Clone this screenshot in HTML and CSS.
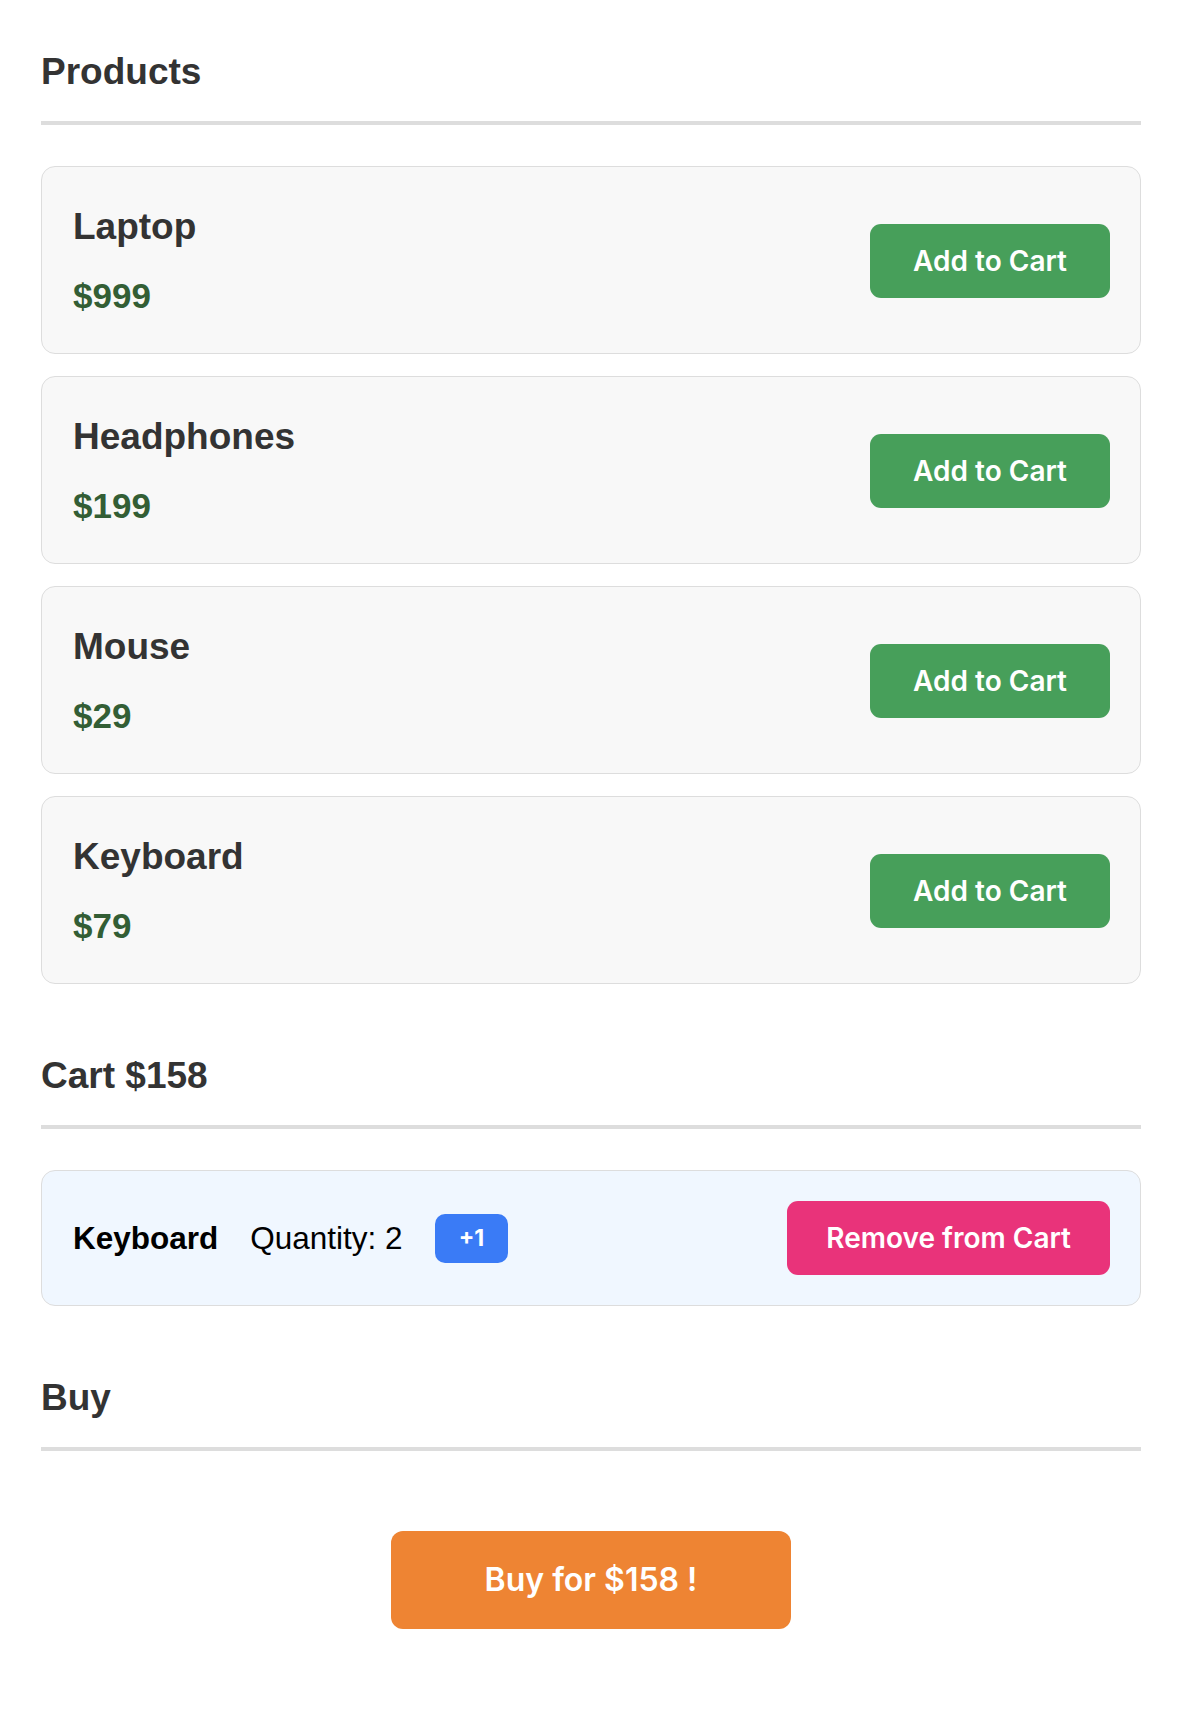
FILE: index.html
```html
<!DOCTYPE html>
<html lang="en">
<head>
<meta charset="utf-8">
<title>Shop</title>
<link rel="stylesheet" href="styles.css">
</head>
<body>
<main class="page">
  <section class="section">
    <h2 class="section-title">Products</h2>
    <div class="product-list">
      <div class="product-card">
        <div class="product-info">
          <h3 class="product-name">Laptop</h3>
          <p class="product-price">$999</p>
        </div>
        <button class="btn btn-add">Add to Cart</button>
      </div>
      <div class="product-card">
        <div class="product-info">
          <h3 class="product-name">Headphones</h3>
          <p class="product-price">$199</p>
        </div>
        <button class="btn btn-add">Add to Cart</button>
      </div>
      <div class="product-card">
        <div class="product-info">
          <h3 class="product-name">Mouse</h3>
          <p class="product-price">$29</p>
        </div>
        <button class="btn btn-add">Add to Cart</button>
      </div>
      <div class="product-card">
        <div class="product-info">
          <h3 class="product-name">Keyboard</h3>
          <p class="product-price">$79</p>
        </div>
        <button class="btn btn-add">Add to Cart</button>
      </div>
    </div>
  </section>

  <section class="section">
    <h2 class="section-title">Cart $158</h2>
    <div class="cart-item">
      <div class="cart-info">
        <strong class="cart-name">Keyboard</strong>
        <span class="cart-qty">Quantity: 2</span>
        <button class="btn btn-plus">+1</button>
      </div>
      <button class="btn btn-remove">Remove from Cart</button>
    </div>
  </section>

  <section class="section">
    <h2 class="section-title">Buy</h2>
    <div class="buy-row">
      <button class="btn btn-buy">Buy for $158 !</button>
    </div>
  </section>
</main>
</body>
</html>
```

FILE: styles.css
```css
* {
  box-sizing: border-box;
}

body {
  margin: 0;
  background: #ffffff;
  font-family: "Liberation Sans", Arial, sans-serif;
  color: #333333;
}

.page {
  padding: 50px 45px 80px 41px;
}

.section + .section {
  margin-top: 70px;
}

.section-title {
  margin: 0 0 41px;
  font-size: 37px;
  line-height: 44px;
  font-weight: 700;
  color: #333333;
  padding-bottom: 27px;
  border-bottom: 4px solid #dddddd;
}

.product-list {
  display: flex;
  flex-direction: column;
  gap: 22px;
}

.product-card {
  display: flex;
  align-items: center;
  justify-content: space-between;
  background: #f8f8f8;
  border: 1px solid #dddddd;
  border-radius: 14px;
  padding: 38px 30px 36px 31px;
}

.product-info {
  display: flex;
  flex-direction: column;
}

.product-name {
  margin: 0;
  font-size: 37px;
  line-height: 44px;
  font-weight: 700;
  color: #333333;
}

.product-price {
  margin: 26px 0 0;
  font-size: 35px;
  line-height: 42px;
  font-weight: 700;
  color: #335e35;
}

.btn {
  border: none;
  color: #ffffff;
  font-family: Inter, "Noto Sans", sans-serif;
  font-weight: 600;
  cursor: pointer;
}

.btn-add {
  background: #479f5a;
  font-size: 28px;
  line-height: 32px;
  padding: 21px 43px;
  border-radius: 11px;
}

.cart-item {
  display: flex;
  align-items: center;
  justify-content: space-between;
  background: #f0f7ff;
  border: 1px solid #dddddd;
  border-radius: 14px;
  padding: 30px 30px 30px 31px;
}

.cart-info {
  display: flex;
  align-items: center;
  gap: 32px;
}

.cart-name {
  font-size: 31.5px;
  font-weight: 700;
  color: #000000;
}

.cart-qty {
  font-size: 31.5px;
  color: #000000;
}

.btn-plus {
  background: #3a7bf6;
  font-size: 23px;
  font-weight: 700;
  line-height: 27px;
  padding: 11px 24px;
  border-radius: 10px;
}

.btn-remove {
  background: #e9337a;
  font-size: 28px;
  line-height: 32px;
  padding: 21px 39px;
  border-radius: 11px;
}

.buy-row {
  display: flex;
  justify-content: center;
  padding-top: 39px;
}

.btn-buy {
  width: 400px;
  background: #ee8433;
  font-size: 32px;
  line-height: 38px;
  padding: 30px 0;
  border-radius: 12px;
}
```
